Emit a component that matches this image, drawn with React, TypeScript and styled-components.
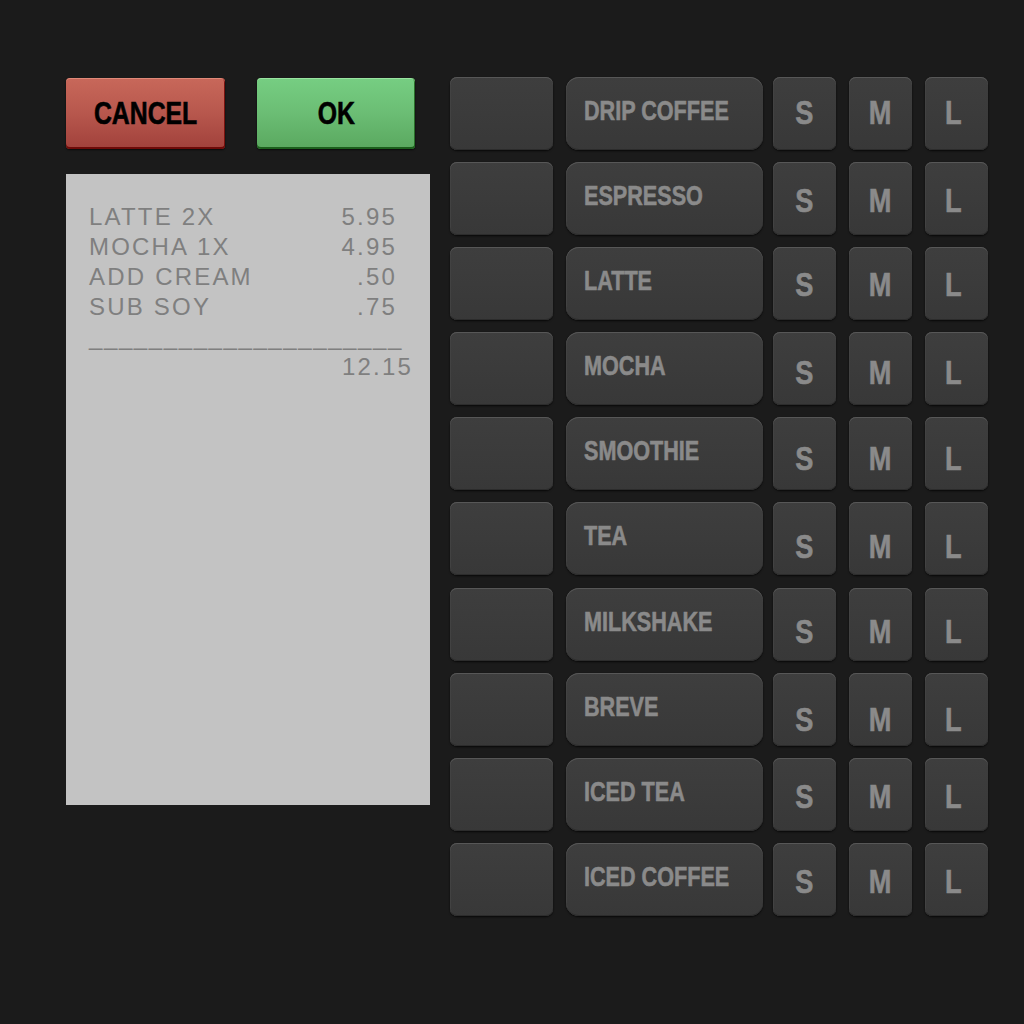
import React from "react";
import styled, { createGlobalStyle } from "styled-components";

const Global = createGlobalStyle`
  html, body { margin: 0; padding: 0; background: #1b1b1b; }
  body { width: 1024px; height: 1024px; overflow: hidden; }
`;

const Page = styled.div`
  display: flex;
  align-items: flex-start;
  gap: 20px;
  padding: 77px 0 0 66px;
  height: 1024px;
  box-sizing: border-box;
  background: #1b1b1b;
`;

const LeftColumn = styled.div`
  width: 364px;
  display: flex;
  flex-direction: column;
  gap: 25px;
  padding-top: 1px;
`;

const ActionRow = styled.div`
  display: flex;
  gap: 32px;
`;

/* Condensed bold label: Arial-metric bold squeezed horizontally */
const Condensed = styled.span<{ $origin?: string }>`
  display: inline-block;
  font-family: "Liberation Sans", Arial, sans-serif;
  font-weight: 700;
  white-space: nowrap;
  -webkit-text-stroke: 0.6px currentColor;
  transform: scaleX(0.8);
  transform-origin: ${(p) => p.$origin || "center"} center;
`;

const ActionButton = styled.button<{ $tone: "red" | "green"; $w: number }>`
  width: ${(p) => p.$w}px;
  height: 71px;
  border: none;
  border-radius: 4px;
  font-size: 31px;
  color: #000;
  padding: 0;
  display: flex;
  align-items: center;
  justify-content: center;
  cursor: pointer;
  background: ${(p) =>
    p.$tone === "red"
      ? "linear-gradient(#c8685a 0%, #b7574d 50%, #a1413b 100%)"
      : "linear-gradient(#76ce82 0%, #6bbd74 50%, #5aa85f 100%)"};
  box-shadow: ${(p) =>
    p.$tone === "red"
      ? "inset 0 1px 0 rgba(255,180,160,0.45), inset 0 -2px 0 #6e0a08, inset -1px 0 0 #7a1410, 0 1px 2px rgba(0,0,0,0.7)"
      : "inset 0 1px 0 rgba(200,255,200,0.45), inset 0 -2px 0 #1c5f1c, inset -1px 0 0 #2a6e2a, 0 1px 2px rgba(0,0,0,0.7)"};
`;

const Receipt = styled.div`
  height: 631px;
  background: #c3c3c3;
  box-sizing: border-box;
  padding: 28px 17px 0 23px;
  font-family: "Liberation Sans", Arial, sans-serif;
  font-size: 24px;
  line-height: 30px;
  letter-spacing: 2.2px;
  color: #7f7f7f;
`;

const ReceiptLine = styled.div`
  display: flex;
  justify-content: space-between;
  padding-right: 16px;
  white-space: pre;
`;

const Rule = styled.div`
  letter-spacing: 1.6px;
  white-space: pre;
`;

const Total = styled.div`
  text-align: right;
`;

const MenuGrid = styled.div`
  display: grid;
  grid-template-columns: 103px 194px 63px 63px 63px;
  grid-auto-rows: 73px;
  column-gap: 13px;
  row-gap: 12.1px;
`;

const Key = styled.button<{ $radius: number }>`
  border: none;
  padding: 0;
  margin: 0;
  border-radius: ${(p) => p.$radius}px;
  background: linear-gradient(#3e3e3e, #383838);
  box-shadow: inset 0 1px 0 #575757, inset 0 -1px 0 #2c2c2c, inset 1px 0 0 #424242,
    0 1px 2px rgba(0, 0, 0, 0.75);
  color: #8a8a8a;
  cursor: pointer;
`;

const BlankKey = styled(Key)``;

const NameKey = styled(Key)`
  width: calc(100% + 3px);
  display: flex;
  align-items: center;
  justify-content: flex-start;
  padding: 0 0 4px 18px;
  font-size: 27px;
`;

const SizeKey = styled(Key)<{ $drop: number; $shift?: number }>`
  display: flex;
  justify-content: center;
  align-items: flex-start;
  padding: ${(p) => p.$drop}px ${(p) => p.$shift || 0}px 0 0;
  font-size: 34px;
  line-height: 1;
  box-sizing: border-box;
`;

const items: [string, string][] = [
  ["LATTE 2X", "5.95"],
  ["MOCHA 1X", "4.95"],
  ["ADD CREAM", ".50"],
  ["SUB SOY", ".75"],
];

const drinks: { name: string; drop: number }[] = [
  { name: "DRIP COFFEE", drop: 18 },
  { name: "ESPRESSO", drop: 21 },
  { name: "LATTE", drop: 20 },
  { name: "MOCHA", drop: 23 },
  { name: "SMOOTHIE", drop: 24 },
  { name: "TEA", drop: 27 },
  { name: "MILKSHAKE", drop: 26 },
  { name: "BREVE", drop: 29 },
  { name: "ICED TEA", drop: 21 },
  { name: "ICED COFFEE", drop: 21 },
];

export default function App() {
  return (
    <>
      <Global />
      <Page>
        <LeftColumn>
          <ActionRow>
            <ActionButton $tone="red" $w={159}>
              <Condensed>CANCEL</Condensed>
            </ActionButton>
            <ActionButton $tone="green" $w={158}>
              <Condensed>OK</Condensed>
            </ActionButton>
          </ActionRow>
          <Receipt>
            {items.map(([label, price]) => (
              <ReceiptLine key={label}>
                <span>{label}</span>
                <span>{price}</span>
              </ReceiptLine>
            ))}
            <Rule>{"_".repeat(21)}</Rule>
            <Total>12.15</Total>
          </Receipt>
        </LeftColumn>
        <MenuGrid>
          {drinks.map((d) => (
            <React.Fragment key={d.name}>
              <BlankKey $radius={7} aria-label="empty" />
              <NameKey $radius={13}>
                <Condensed $origin="left">{d.name}</Condensed>
              </NameKey>
              <SizeKey $radius={7} $drop={d.drop}>
                <Condensed>S</Condensed>
              </SizeKey>
              <SizeKey $radius={7} $drop={d.drop}>
                <Condensed>M</Condensed>
              </SizeKey>
              <SizeKey $radius={7} $drop={d.drop} $shift={6}>
                <Condensed>L</Condensed>
              </SizeKey>
            </React.Fragment>
          ))}
        </MenuGrid>
      </Page>
    </>
  );
}
